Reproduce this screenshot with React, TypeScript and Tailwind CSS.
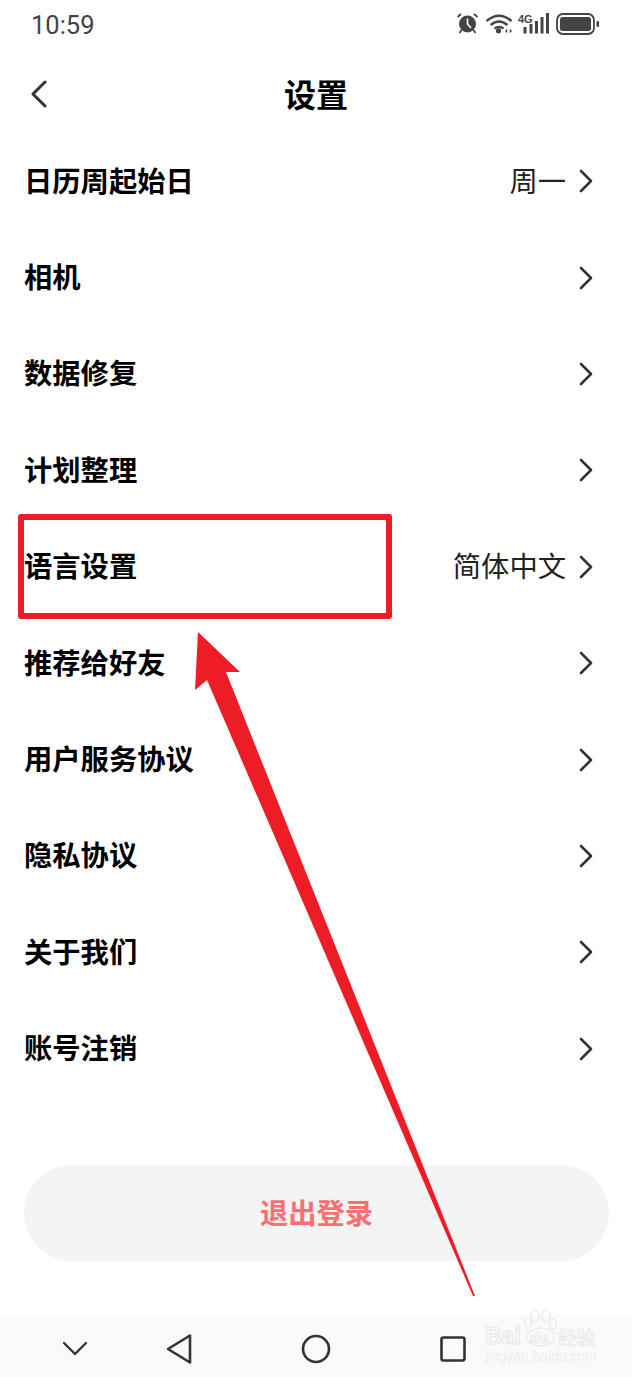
const rows = [
  { label: '日历周起始日', value: '周一' },
  { label: '相机' },
  { label: '数据修复' },
  { label: '计划整理' },
  { label: '语言设置', value: '简体中文' },
  { label: '推荐给好友' },
  { label: '用户服务协议' },
  { label: '隐私协议' },
  { label: '关于我们' },
  { label: '账号注销' },
];

function StatusIcons() {
  return (
    <svg width="144" height="24" viewBox="0 0 144 24" fill="none" className="text-[#444]">
      {/* alarm */}
      <circle cx="11.500" cy="11" r="8.500" fill="currentColor" />
      <path d="M11.500 5.500v5.500l3.500 4" stroke="#fff" strokeWidth="1.600" />
      <path d="M1.500 4 5 1M21.500 4 18 1M5.500 17l-2 3M17.500 17l2 3" stroke="currentColor" strokeWidth="1.800" />
      {/* wifi */}
      <path d="M30.500 8Q43-2.500 55.500 8M34.500 12Q43 5 51.500 12M38.500 15.500q4.500-3 9 0" stroke="currentColor" strokeWidth="2.400" />
      <circle cx="42.500" cy="17.800" r="2.600" fill="currentColor" />
      <path d="M49 18l2.200-2.200v4.400zM56 18l-2.200-2.200v4.400z" fill="currentColor" />
      {/* signal */}
      <text x="62" y="10" fontSize="11" fontWeight="700" fill="currentColor" fontFamily="'Liberation Sans', sans-serif">4G</text>
      <path d="M69 14v6.500M75 11v9.500M80.500 8v12.500M86 4v16.500M91.500 0v20.500" stroke="currentColor" strokeWidth="3" />
      {/* battery */}
      <rect x="101" y="1" width="37" height="20" rx="6" stroke="currentColor" strokeWidth="1.800" />
      <rect x="104" y="4" width="31" height="14" rx="2.500" fill="currentColor" />
      <rect x="140.500" y="8" width="2.500" height="6" rx="1" fill="currentColor" />
    </svg>
  );
}

function Chevron() {
  return (
    <svg width="16" height="24" viewBox="0 0 16 24" fill="none" className="ml-[12px]">
      <path d="M3 2l10 10L3 22" stroke="#333" strokeWidth="2.600" strokeLinecap="round" strokeLinejoin="round" />
    </svg>
  );
}

export default function App() {
  return (
    <div
      className="relative h-[1377px] w-[632px] overflow-hidden bg-white text-black"
      style={{ fontFamily: "'Noto Sans CJK SC', sans-serif" }}
    >
      <div className="flex h-[50px] items-center justify-between pl-[31px] pr-[32px]">
        <span className="text-[25.500px] text-[#444] font-['Roboto',sans-serif]">10:59</span>
        <StatusIcons />
      </div>

      <div className="relative flex h-[83px] items-center justify-center pt-[3px]">
        <svg width="18" height="28" viewBox="0 0 18 28" fill="none" className="absolute left-[30px] top-[30px]">
          <path d="M15 2 3 14l12 12" stroke="#333" strokeWidth="3" strokeLinecap="round" strokeLinejoin="round" />
        </svg>
        <h1 className="text-[32px] font-bold leading-none">设置</h1>
      </div>

      <div className="flex flex-col">
        {rows.map((row) => (
          <div key={row.label} className="flex h-[96.4px] items-center justify-between pl-[24px] pr-[38px]">
            <span className="pb-[3px] text-[28.300px] font-bold leading-none">{row.label}</span>
            <div className="flex items-center">
              {row.value && <span className="pb-[3px] text-[28.300px] leading-none text-[#222]">{row.value}</span>}
              <Chevron />
            </div>
          </div>
        ))}
      </div>

      <div className="mx-[24px] mt-[68px] flex h-[96px] w-[585px] items-center justify-center rounded-[48px] bg-[#f4f4f4] pb-[2px]">
        <span className="text-[28.300px] font-bold text-[#fb6f72]">退出登录</span>
      </div>

      <div className="mt-[54px] flex h-[62px] items-center bg-[#fafafa] pl-[62px] pt-[7px]">
        <svg width="26" height="16" viewBox="0 0 26 16" fill="none">
          <path d="M2 2l11 11L24 2" stroke="#333" strokeWidth="2.400" strokeLinecap="round" strokeLinejoin="round" />
        </svg>
        <svg width="28" height="32" viewBox="0 0 28 32" fill="none" className="ml-[77px]">
          <path d="M25 2.500v27L3 16z" stroke="#333" strokeWidth="2.600" strokeLinejoin="round" />
        </svg>
        <svg width="30" height="30" viewBox="0 0 30 30" fill="none" className="ml-[108px]">
          <circle cx="15" cy="15" r="13" stroke="#333" strokeWidth="2.600" />
        </svg>
        <svg width="26" height="26" viewBox="0 0 26 26" fill="none" className="ml-[109px]">
          <rect x="1.500" y="1.500" width="23" height="23" rx="2" stroke="#333" strokeWidth="2.600" />
        </svg>
      </div>

      {/* baidu watermark */}
      <div className="absolute left-[485px] top-[1308px] w-[116px] leading-none">
        <svg width="36" height="40" viewBox="0 0 36 40" fill="none" className="absolute left-[38px] top-0" stroke="#e8e8e8" strokeWidth="1.200">
          <ellipse cx="5" cy="15" rx="3.500" ry="5" />
          <ellipse cx="12" cy="8" rx="4" ry="6" />
          <ellipse cx="23" cy="8" rx="4" ry="6" />
          <ellipse cx="30" cy="16" rx="3.500" ry="5" />
          <ellipse cx="17.500" cy="29" rx="14" ry="9" />
        </svg>
        <div className="mt-[15px] flex h-[26px] items-center text-[23px] font-bold text-transparent [-webkit-text-stroke:1px_#e6e6e6] font-['Liberation_Sans',sans-serif]">
          <span>Bai</span>
          <span className="ml-[9px] mt-[3px] text-[15px] [-webkit-text-stroke:0.700px_#e6e6e6]">du</span>
          <span className="ml-[9px] text-[19px] font-normal [-webkit-text-stroke:0.600px_#e6e6e6] font-['Noto_Sans_CJK_SC',sans-serif]">经验</span>
        </div>
        <div className="mt-[1px] text-[13.800px] text-[#ededed] font-['Liberation_Sans',sans-serif] whitespace-nowrap">jingyan.baidu.com</div>
      </div>

      {/* red annotation */}
      <div className="absolute left-[18px] top-[514px] h-[105px] w-[374px] rounded-[3px] border-[6px] border-[#ee1c25]" />
      <svg width="632" height="1377" viewBox="0 0 632 1377" fill="none" className="absolute left-0 top-0">
        <path d="M198 632 240 672 226 672 475 1296 473 1296 207 680 195 690Z" fill="#ee1c25" />
      </svg>
    </div>
  );
}
